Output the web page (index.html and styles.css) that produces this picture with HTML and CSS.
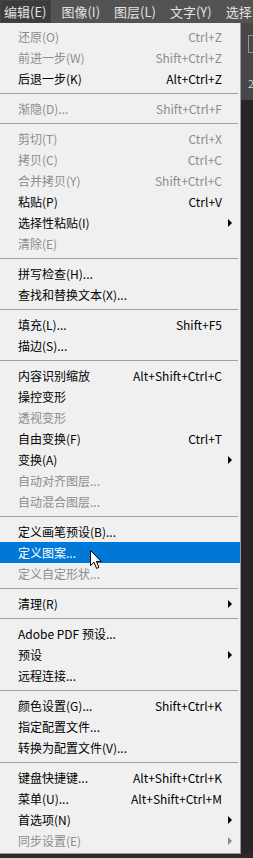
FILE: index.html
```html
<!DOCTYPE html>
<html lang="zh-CN">
<head>
    <meta charset="UTF-8">
    <title>编辑菜单</title>
    <link rel="stylesheet" href="styles.css">
</head>
<body>

<div class="menubar">
    <span class="bar-item active">编辑(E)</span>
    <span class="bar-item">图像(I)</span>
    <span class="bar-item">图层(L)</span>
    <span class="bar-item">文字(Y)</span>
    <span class="bar-item">选择</span>
</div>

<div class="workspace">
    <div class="menu">
        <div class="item off"><span>还原(O)</span><span class="key">Ctrl+Z</span></div>
        <div class="item off"><span>前进一步(W)</span><span class="key">Shift+Ctrl+Z</span></div>
        <div class="item"><span>后退一步(K)</span><span class="key">Alt+Ctrl+Z</span></div>
        <div class="sep"></div>
        <div class="item off"><span>渐隐(D)...</span><span class="key">Shift+Ctrl+F</span></div>
        <div class="sep"></div>
        <div class="item off"><span>剪切(T)</span><span class="key">Ctrl+X</span></div>
        <div class="item off"><span>拷贝(C)</span><span class="key">Ctrl+C</span></div>
        <div class="item off"><span>合并拷贝(Y)</span><span class="key">Shift+Ctrl+C</span></div>
        <div class="item"><span>粘贴(P)</span><span class="key">Ctrl+V</span></div>
        <div class="item sub"><span>选择性粘贴(I)</span></div>
        <div class="item off"><span>清除(E)</span></div>
        <div class="sep"></div>
        <div class="item"><span>拼写检查(H)...</span></div>
        <div class="item"><span>查找和替换文本(X)...</span></div>
        <div class="sep"></div>
        <div class="item"><span>填充(L)...</span><span class="key">Shift+F5</span></div>
        <div class="item"><span>描边(S)...</span></div>
        <div class="sep"></div>
        <div class="item"><span>内容识别缩放</span><span class="key">Alt+Shift+Ctrl+C</span></div>
        <div class="item"><span>操控变形</span></div>
        <div class="item off"><span>透视变形</span></div>
        <div class="item"><span>自由变换(F)</span><span class="key">Ctrl+T</span></div>
        <div class="item sub"><span>变换(A)</span></div>
        <div class="item off"><span>自动对齐图层...</span></div>
        <div class="item off"><span>自动混合图层...</span></div>
        <div class="sep"></div>
        <div class="item"><span>定义画笔预设(B)...</span></div>
        <div class="item hover"><span>定义图案...</span></div>
        <div class="item off"><span>定义自定形状...</span></div>
        <div class="sep"></div>
        <div class="item sub"><span>清理(R)</span></div>
        <div class="sep"></div>
        <div class="item"><span>Adobe PDF 预设...</span></div>
        <div class="item sub"><span>预设</span></div>
        <div class="item"><span>远程连接...</span></div>
        <div class="sep"></div>
        <div class="item"><span>颜色设置(G)...</span><span class="key">Shift+Ctrl+K</span></div>
        <div class="item"><span>指定配置文件...</span></div>
        <div class="item"><span>转换为配置文件(V)...</span></div>
        <div class="sep"></div>
        <div class="item"><span>键盘快捷键...</span><span class="key">Alt+Shift+Ctrl+K</span></div>
        <div class="item"><span>菜单(U)...</span><span class="key">Alt+Shift+Ctrl+M</span></div>
        <div class="item sub"><span>首选项(N)</span></div>
        <div class="item sub off"><span>同步设置(E)</span></div>
    </div>
    <div class="side">
        <div class="options"><div class="opt-box"></div><span class="opt-text">2</span></div>
        <div class="panel"></div>
    </div>
</div>

<svg class="cursor" width="14" height="20" viewBox="0 0 14 20">
    <path d="M0.5 0.5 L0.5 15.5 L4 12.2 L6.6 18.4 L8.9 17.4 L6.4 11.4 L11.2 11.4 Z" fill="#fff" stroke="#000" stroke-width="1"/>
</svg>

</body>
</html>
```

FILE: styles.css
```css
body {
    margin: 0;
    width: 253px;
    height: 858px;
    overflow: hidden;
    background: #2b2b2b;
    font-family: "Noto Sans CJK SC", "Liberation Sans", sans-serif;
    position: relative;
}

.menubar {
    height: 23px;
    background: #535353;
    display: flex;
    align-items: center;
    font-size: 13px;
    color: #e2e2e2;
    white-space: nowrap;
    overflow: hidden;
}

.bar-item {
    flex: none;
    padding: 0 7px;
    height: 23px;
    line-height: 23px;
}

.bar-item.active {
    background: #3c3c3c;
    box-shadow: inset 0 0 0 1px #444;
    padding: 0 5px 0 4px;
    margin-right: 3px;
}

.workspace {
    display: flex;
    height: 831px;
}

.menu {
    flex: none;
    width: 240px;
    background: #f0f0f0;
    border-right: 1px solid #9a9a9a;
    border-bottom: 1px solid #9a9a9a;
    padding: 3px 0 2px;
    font-size: 12px;
    color: #000;
}

.item {
    height: 21px;
    display: flex;
    align-items: center;
    padding: 0 18px;
    white-space: nowrap;
    position: relative;
}

.item .key { margin-left: auto; }

.item.off { color: #8d8d8d; }

.item.hover {
    background: #0078d7;
    color: #fff;
}

.item.sub::after {
    content: "";
    position: absolute;
    left: 228px;
    top: 7px;
    border-left: 4px solid #000;
    border-top: 4px solid transparent;
    border-bottom: 4px solid transparent;
}

.item.sub.off::after { border-left-color: #8d8d8d; }

.sep {
    height: 9px;
    display: flex;
    align-items: center;
    margin-right: 2px;
}

.sep::before {
    content: "";
    flex: 1;
    height: 1px;
    background: #a0a0a0;
}

.side {
    flex: 1;
    min-width: 0;
    display: flex;
    flex-direction: column;
    overflow: hidden;
}

.options {
    height: 65px;
    background: #474747;
    padding: 12px 0 0 7px;
    color: #cfcfcf;
    font-size: 11px;
}

.opt-box {
    width: 10px;
    height: 16px;
    border: 1px solid #999;
    border-right: none;
}

.opt-text {
    display: block;
    margin-top: 22px;
}

.panel {
    flex: 1;
    background: #262626;
}

.cursor {
    position: absolute;
    left: 90px;
    top: 550px;
}
```
